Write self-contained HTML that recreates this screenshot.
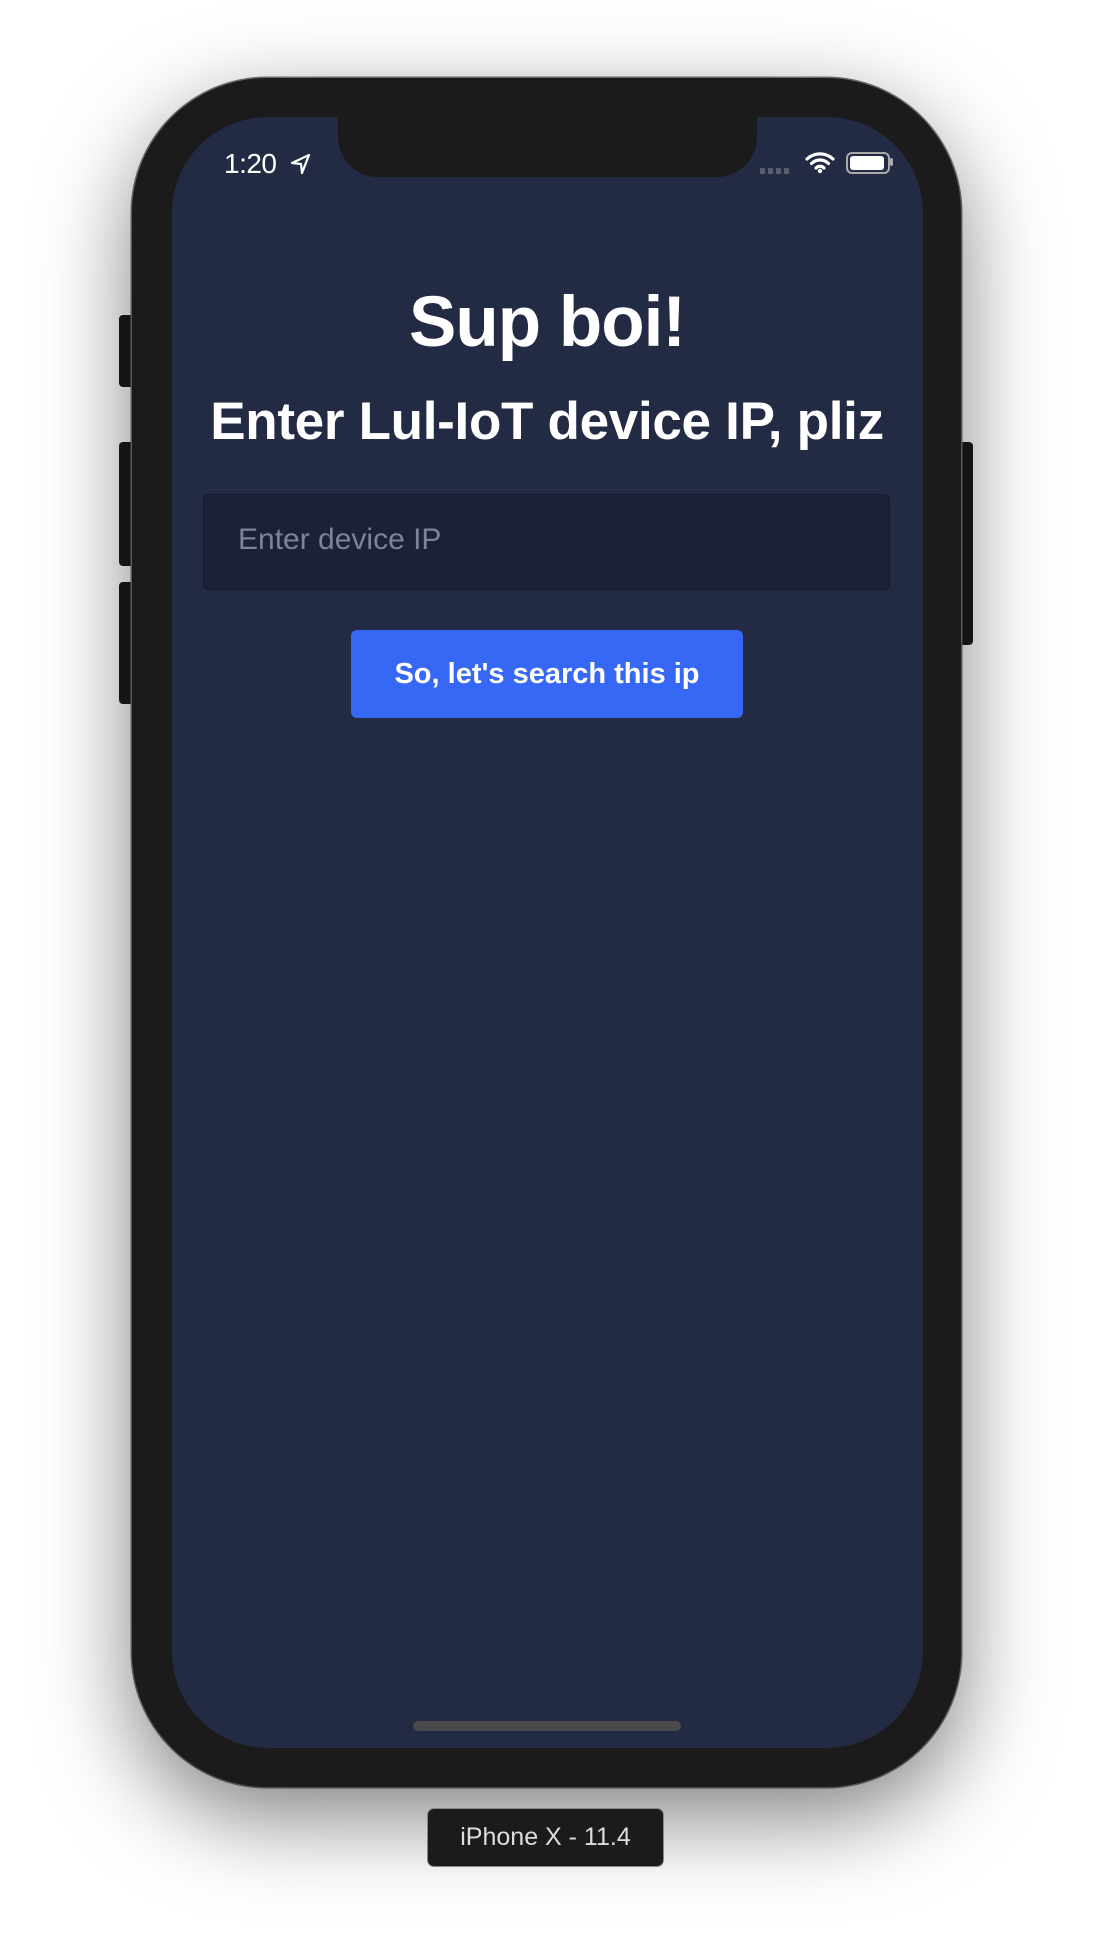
<!DOCTYPE html>
<html><head><style>
body{margin:0;width:1094px;height:1934px;background:#fff;position:relative;overflow:hidden;font-family:"Liberation Sans",sans-serif}
.a{position:absolute}
.phone{left:132px;top:78px;width:829px;height:1709px;background:#1b1b1b;border-radius:135px;box-shadow:0 30px 90px rgba(0,0,0,.5),0 0 0 1.5px #777}
.screen{left:172px;top:117px;width:751px;height:1631px;background:#232a43;border-radius:96px;overflow:hidden}
.notch{left:338px;top:110px;width:419px;height:67px;background:#1b1b1b;border-radius:0 0 40px 40px}
.btn{background:#1b1b1b;border-radius:4px}
</style></head><body>
<div class="a btn" style="left:119px;top:315px;width:16px;height:72px"></div>
<div class="a btn" style="left:119px;top:442px;width:16px;height:124px"></div>
<div class="a btn" style="left:119px;top:582px;width:16px;height:122px"></div>
<div class="a btn" style="left:958px;top:442px;width:15px;height:203px"></div>
<div class="a phone"></div>
<div class="a screen"></div>
<div class="a notch"></div>
<div class="a" style="left:224px;top:148px;color:#fff;font-size:28px;letter-spacing:-0.5px">1:20</div>
<svg class="a" style="left:290px;top:153px" width="22" height="22" viewBox="0 0 22 22"><path d="M19 2 L2 10 L11 11 L12 20 Z" fill="none" stroke="#fff" stroke-width="2.2" stroke-linejoin="round"/></svg>
<div class="a" style="left:760px;top:168px;width:30px;height:6px;background:repeating-linear-gradient(90deg,#555d6e 0 5px,transparent 5px 8px)"></div>
<svg class="a" style="left:805px;top:150px" width="30" height="24" viewBox="0 0 30 24"><path d="M2 9 A19 19 0 0 1 28 9 M6.5 13.5 A12 12 0 0 1 23.5 13.5 M11 18 A5.5 5.5 0 0 1 19 18" fill="none" stroke="#fff" stroke-width="3.2" stroke-linecap="round"/><circle cx="15" cy="21" r="2.2" fill="#fff"/></svg>
<div class="a" style="left:846px;top:152px;width:40px;height:18px;border:2px solid #aaa;border-radius:6px"></div>
<div class="a" style="left:850px;top:156px;width:34px;height:14px;background:#fff;border-radius:3px"></div>
<div class="a" style="left:890px;top:158px;width:3px;height:8px;background:#aaa;border-radius:2px"></div>
<div class="a" style="left:0;width:1094px;top:283px;text-align:center;color:#fff;font-weight:bold;font-size:71px;line-height:80px;letter-spacing:-1px">Sup boi!</div>
<div class="a" style="left:0;width:1094px;top:394px;text-align:center;color:#fff;font-weight:bold;font-size:53px;line-height:56px;letter-spacing:-0.3px">Enter Lul-IoT device IP, pliz</div>
<div class="a" style="left:203px;top:494px;width:685px;height:94px;background:#1b2137;border:1px solid #141a2c;border-radius:6px"></div>
<div class="a" style="left:238px;top:522px;color:#7c8499;font-size:30px;line-height:36px">Enter device IP</div>
<div class="a" style="left:351px;top:630px;width:392px;height:88px;background:#3768f5;border-radius:6px;color:#fff;font-weight:bold;font-size:29px;line-height:88px;text-align:center">So, let's search this ip</div>
<div class="a" style="left:413px;top:1721px;width:268px;height:10px;background:#4a4a4a;border-radius:5px"></div>
<div class="a" style="left:428px;top:1809px;width:235px;height:57px;background:#1b1b1b;border-radius:6px;box-shadow:0 0 0 1px #888;color:#ddd;font-size:25px;line-height:57px;text-align:center">iPhone X - 11.4</div>
</body></html>
